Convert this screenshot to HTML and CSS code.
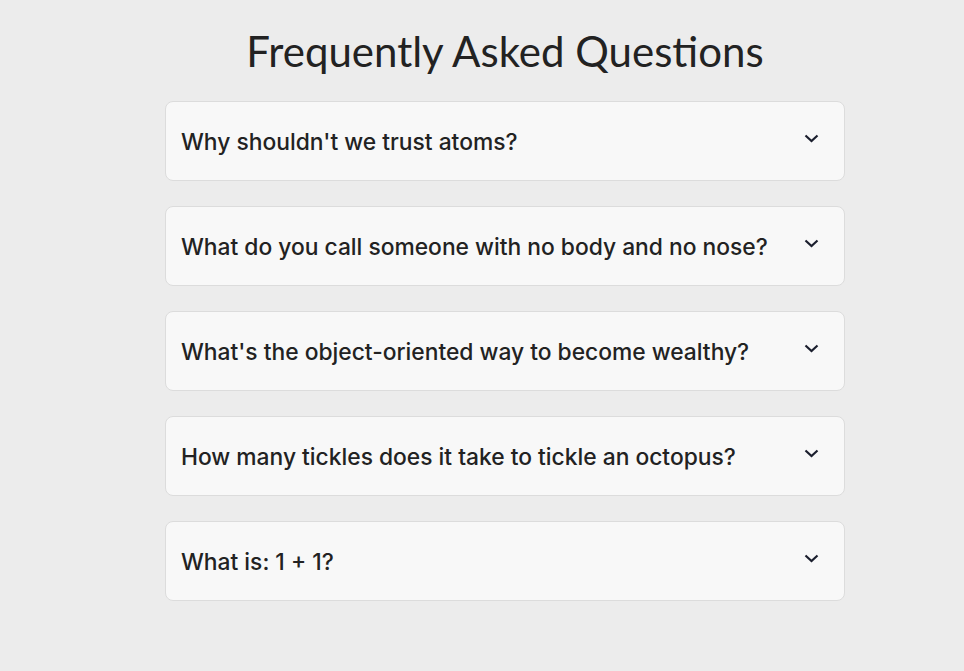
FILE: index.html
```html
<!DOCTYPE html>
<html lang="en">
<head>
<meta charset="utf-8">
<title>FAQ</title>
<link rel="stylesheet" href="styles.css">
</head>
<body>
<main class="faq">
  <h1 class="faq-title">Frequently Asked Questions</h1>
  <div class="faq-list">
    <div class="faq-item"><span class="faq-q">Why shouldn't we trust atoms?</span><svg class="chev" viewBox="0 0 15 9" width="15" height="9"><path d="M1.5 1.5 L7.5 7 L13.5 1.5" fill="none" stroke="#1b1f2e" stroke-width="2.2"/></svg></div>
    <div class="faq-item"><span class="faq-q">What do you call someone with no body and no nose?</span><svg class="chev" viewBox="0 0 15 9" width="15" height="9"><path d="M1.5 1.5 L7.5 7 L13.5 1.5" fill="none" stroke="#1b1f2e" stroke-width="2.2"/></svg></div>
    <div class="faq-item"><span class="faq-q">What's the object-oriented way to become wealthy?</span><svg class="chev" viewBox="0 0 15 9" width="15" height="9"><path d="M1.5 1.5 L7.5 7 L13.5 1.5" fill="none" stroke="#1b1f2e" stroke-width="2.2"/></svg></div>
    <div class="faq-item"><span class="faq-q">How many tickles does it take to tickle an octopus?</span><svg class="chev" viewBox="0 0 15 9" width="15" height="9"><path d="M1.5 1.5 L7.5 7 L13.5 1.5" fill="none" stroke="#1b1f2e" stroke-width="2.2"/></svg></div>
    <div class="faq-item"><span class="faq-q">What is: 1 + 1?</span><svg class="chev" viewBox="0 0 15 9" width="15" height="9"><path d="M1.5 1.5 L7.5 7 L13.5 1.5" fill="none" stroke="#1b1f2e" stroke-width="2.2"/></svg></div>
  </div>
</main>
</body>
</html>
```
FILE: styles.css
```css
* { box-sizing: border-box; }
html, body { margin: 0; padding: 0; }
body {
  background: #ececec;
  font-family: "Lato", "Noto Sans", sans-serif;
  color: #222;
}
.faq {
  width: 680px;
  margin-left: 165px;
  padding-top: 26px;
}
.faq-title {
  margin: 0 0 25px;
  text-align: center;
  font-size: 42px;
  font-weight: 400;
  line-height: 50px;
  color: #222;
}
.faq-list {
  display: flex;
  flex-direction: column;
  gap: 25px;
}
.faq-item {
  height: 80px;
  background: #f8f8f8;
  border: 1px solid #dcdcdc;
  border-radius: 8px;
  padding: 0 25px 0 15px;
  display: flex;
  align-items: center;
  justify-content: space-between;
}
.faq-q {
  font-family: "Inter", "Open Sans", sans-serif;
  font-size: 22.8px;
  font-weight: 500;
  color: #222;
}
.chev { display: block; margin-top: -5px; }
```
